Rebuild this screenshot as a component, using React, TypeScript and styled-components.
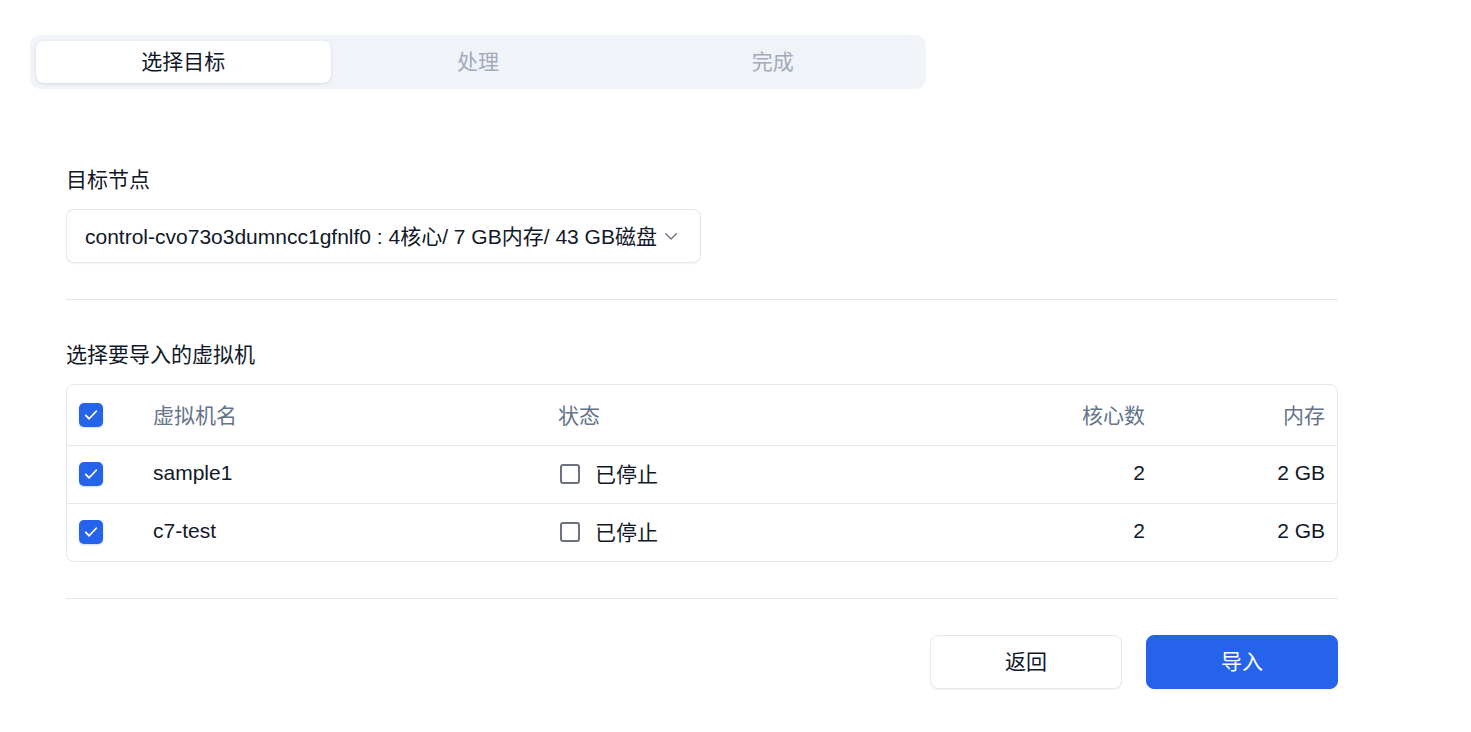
import React from "react";
import styled, { createGlobalStyle } from "styled-components";

const Global = createGlobalStyle`
  html, body { margin: 0; padding: 0; background: #ffffff; }
  body {
    font-family: "Liberation Sans", Arial, "Noto Sans CJK SC", sans-serif;
    color: #111827;
    -webkit-font-smoothing: antialiased;
  }
  * { box-sizing: border-box; }
`;

const Page = styled.div`
  padding: 35px 30px 40px;
  width: 1471px;
`;

const TabBar = styled.div`
  width: 896px;
  height: 54px;
  padding: 6px;
  background: #f0f3f8;
  border-radius: 10px;
  display: grid;
  grid-template-columns: repeat(3, 1fr);
`;

const Tab = styled.div<{ $active?: boolean }>`
  display: flex;
  align-items: center;
  justify-content: center;
  padding-bottom: 4px;
  font-size: 21px;
  border-radius: 8px;
  color: ${(p) => (p.$active ? "#111827" : "#a3aab8")};
  background: ${(p) => (p.$active ? "#ffffff" : "transparent")};
  box-shadow: ${(p) => (p.$active ? "0 1px 3px rgba(15,23,42,0.12)" : "none")};
`;

const Content = styled.div`
  margin-left: 36px;
  width: 1272px;
  padding-top: 76px;
`;

const Label = styled.div<{ $top?: number }>`
  font-size: 21px;
  line-height: 30px;
  color: #111827;
  margin-top: ${(p) => p.$top ?? 0}px;
  margin-bottom: 14px;
`;

const Select = styled.div`
  width: 635px;
  height: 54px;
  border: 1px solid #e2e8f0;
  border-radius: 8px;
  box-shadow: 0 1px 2px rgba(15, 23, 42, 0.05);
  display: flex;
  align-items: center;
  padding: 0 20px 3px 18px;
  gap: 5px;
  font-size: 21px;
  color: #111827;
  white-space: nowrap;
  & svg { margin-top: 3px; }
`;

const Divider = styled.hr`
  border: none;
  border-top: 1px solid #e5e7eb;
  margin: 36px 0 0;
`;

const Table = styled.div`
  border: 1px solid #e2e8f0;
  border-radius: 8px;
  overflow: hidden;
`;

const Row = styled.div<{ $head?: boolean }>`
  display: grid;
  grid-template-columns: 74px 405px 431px 180px 180px;
  height: ${(p) => (p.$head ? 60 : 58)}px;
  padding-bottom: 3px;
  align-items: center;
  font-size: 21px;
  color: ${(p) => (p.$head ? "#64748b" : "#111827")};
  & + & {
    border-top: 1px solid #e2e8f0;
  }
`;

const Cell = styled.div<{ $right?: boolean }>`
  padding: 0 12px;
  display: flex;
  align-items: center;
  justify-content: ${(p) => (p.$right ? "flex-end" : "flex-start")};
  gap: 15px;
  white-space: nowrap;
`;

const CheckBox = styled.div`
  width: 24px;
  height: 24px;
  margin-top: 2px;
  border-radius: 5px;
  background: #2563eb;
  display: flex;
  align-items: center;
  justify-content: center;
  box-shadow: 0 1px 2px rgba(37, 99, 235, 0.25);
`;

const EmptyBox = styled.div`
  width: 20px;
  height: 20px;
  margin-top: 2px;
  border: 2px solid #6b7280;
  border-radius: 3px;
  margin-left: 2px;
`;

const Actions = styled.div`
  display: flex;
  justify-content: flex-end;
  gap: 24px;
  margin-top: 36px;
`;

const Button = styled.button<{ $primary?: boolean }>`
  width: 192px;
  height: 54px;
  padding: 0 0 5px;
  border-radius: 8px;
  font-family: inherit;
  font-size: 21px;
  border: 1px solid ${(p) => (p.$primary ? "#2563eb" : "#e2e8f0")};
  background: ${(p) => (p.$primary ? "#2563eb" : "#ffffff")};
  color: ${(p) => (p.$primary ? "#ffffff" : "#111827")};
  box-shadow: 0 1px 2px rgba(15, 23, 42, 0.05);
`;

const Check = () => (
  <CheckBox>
    <svg width="18" height="18" viewBox="0 0 24 24" fill="none" stroke="#fff" strokeWidth="2.4" strokeLinecap="round" strokeLinejoin="round">
      <path d="M5 12.5l4.5 4.5L19 7" />
    </svg>
  </CheckBox>
);

const Chevron = () => (
  <svg width="20" height="20" viewBox="0 0 24 24" fill="none" stroke="#6b7280" strokeWidth="1.8" strokeLinecap="round" strokeLinejoin="round">
    <path d="M5 9l7 7 7-7" />
  </svg>
);

const vms = [
  { name: "sample1", status: "已停止", cores: 2, mem: "2 GB" },
  { name: "c7-test", status: "已停止", cores: 2, mem: "2 GB" },
];

export default function App() {
  return (
    <>
      <Global />
      <Page>
        <TabBar>
          <Tab $active>选择目标</Tab>
          <Tab>处理</Tab>
          <Tab>完成</Tab>
        </TabBar>
        <Content>
          <Label>目标节点</Label>
          <Select>
            <span>control-cvo73o3dumncc1gfnlf0 : 4核心/ 7 GB内存/ 43 GB磁盘</span>
            <Chevron />
          </Select>
          <Divider />
          <Label $top={40}>选择要导入的虚拟机</Label>
          <Table>
            <Row $head>
              <Cell><Check /></Cell>
              <Cell>虚拟机名</Cell>
              <Cell>状态</Cell>
              <Cell $right>核心数</Cell>
              <Cell $right>内存</Cell>
            </Row>
            {vms.map((vm) => (
              <Row key={vm.name}>
                <Cell><Check /></Cell>
                <Cell>{vm.name}</Cell>
                <Cell><EmptyBox />{vm.status}</Cell>
                <Cell $right>{vm.cores}</Cell>
                <Cell $right>{vm.mem}</Cell>
              </Row>
            ))}
          </Table>
          <Divider />
          <Actions>
            <Button>返回</Button>
            <Button $primary>导入</Button>
          </Actions>
        </Content>
      </Page>
    </>
  );
}
